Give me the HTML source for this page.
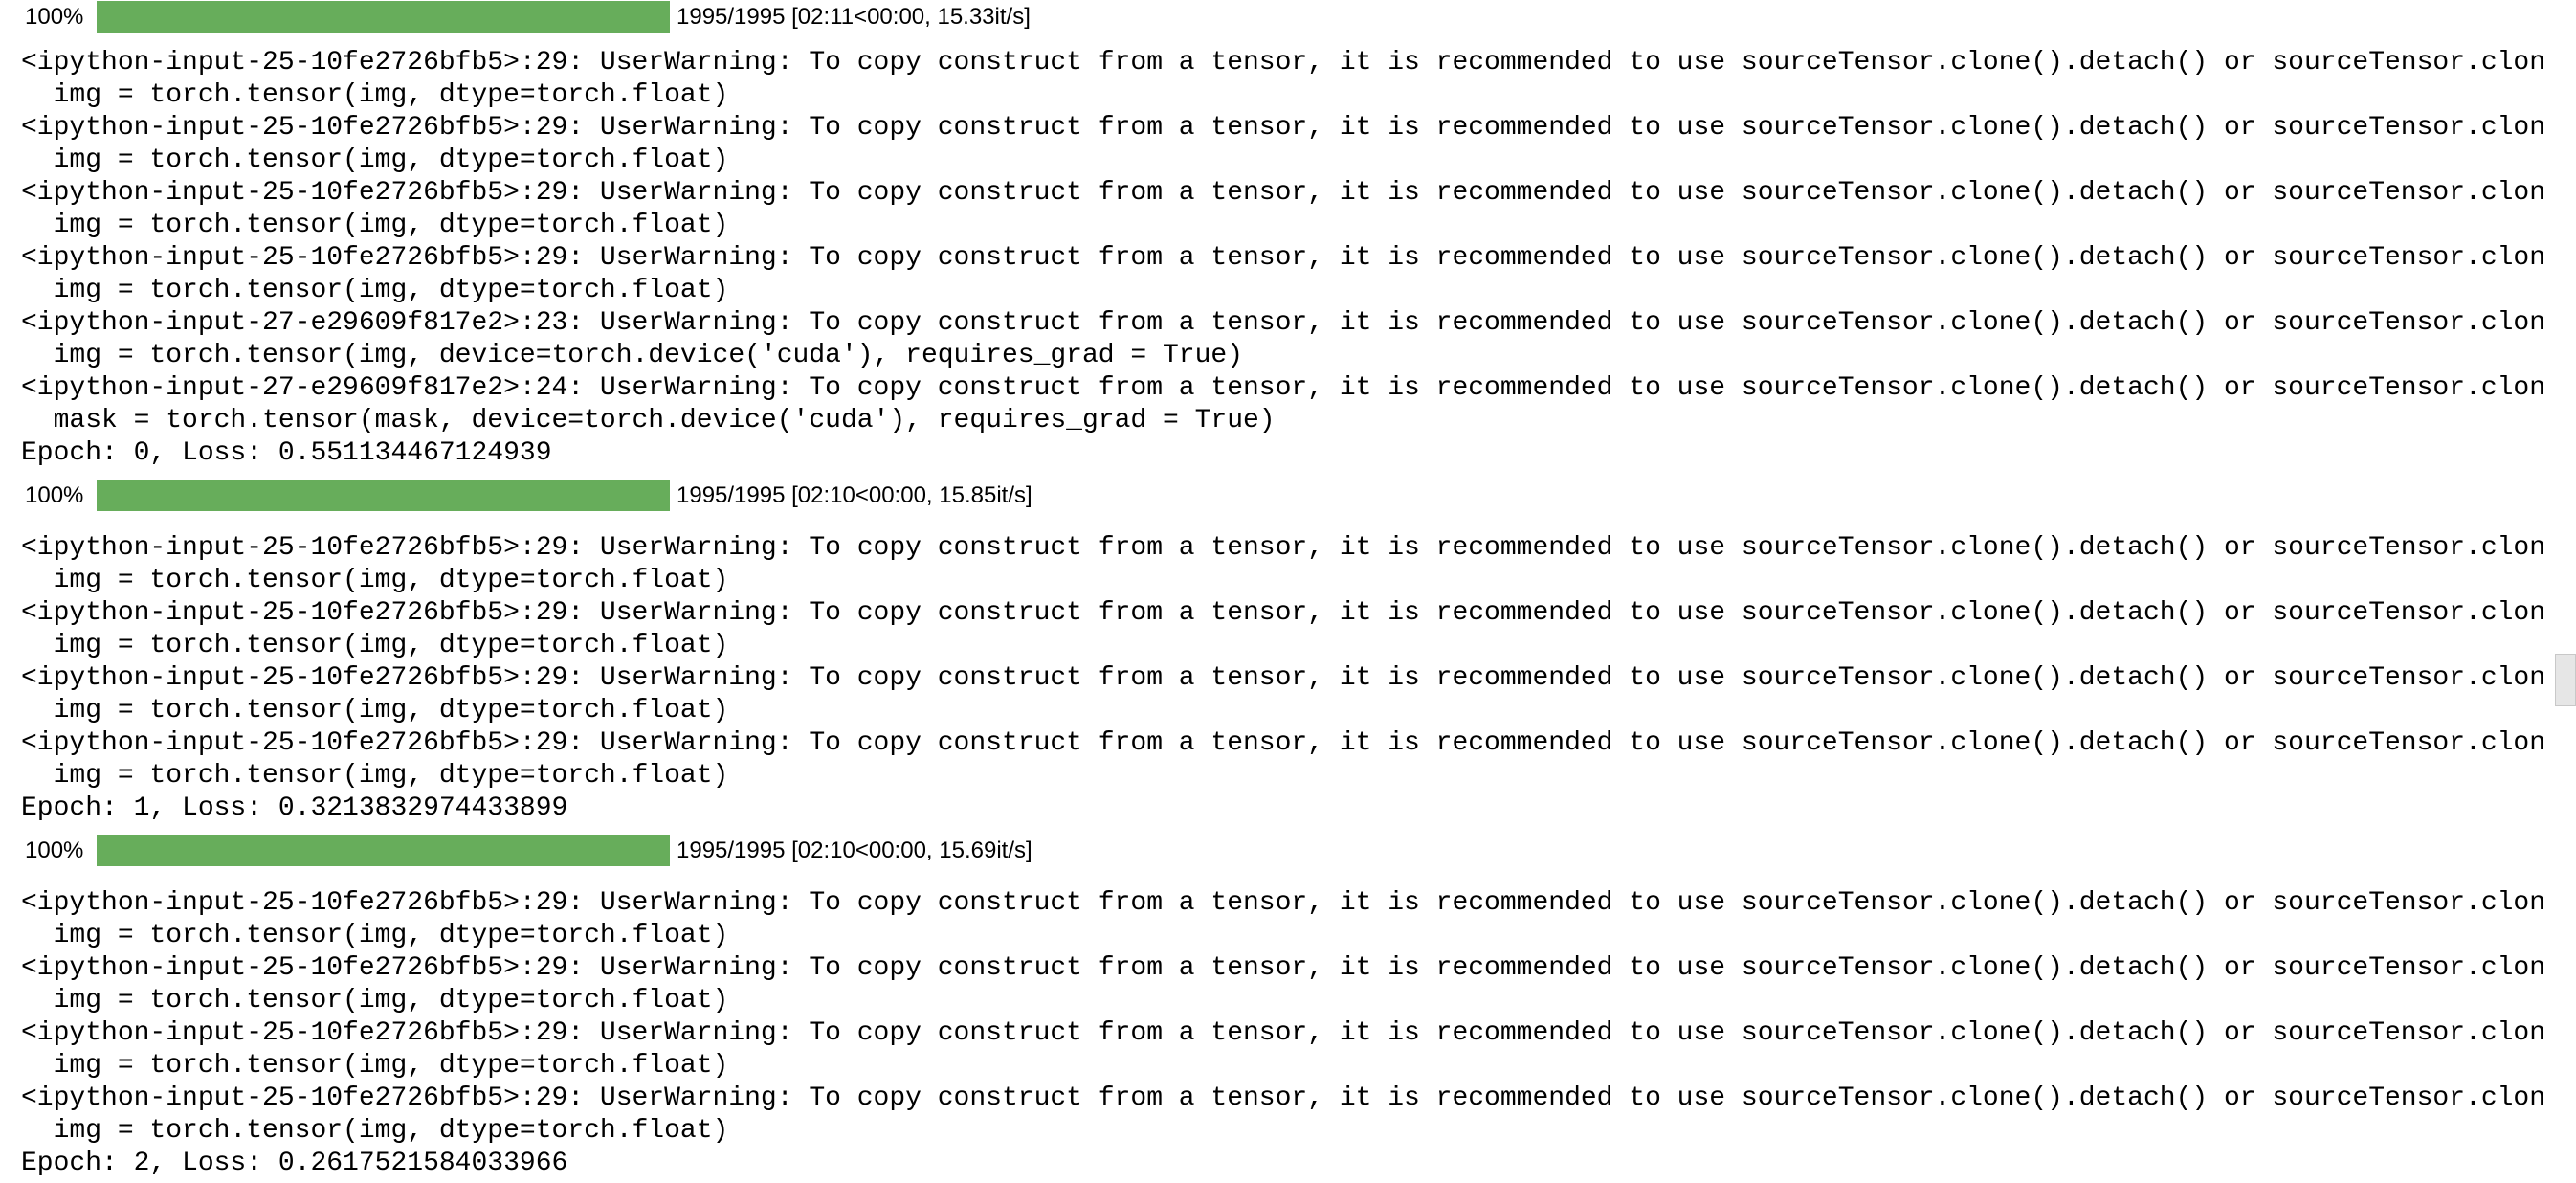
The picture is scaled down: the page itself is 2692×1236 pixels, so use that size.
<!DOCTYPE html>
<html><head><meta charset="utf-8"><style>
html,body{margin:0;padding:0;background:#fff;width:2692px;height:1236px;overflow:hidden;position:relative}
pre{position:absolute;left:22px;margin:0;width:2638px;overflow:hidden;font-family:"Liberation Mono",monospace;font-size:28px;line-height:34px;color:#000;white-space:pre}
.pg{position:absolute;left:0;height:34px;width:1400px;font-family:"Liberation Sans",sans-serif;font-size:24px;color:#000}
.pg .p{position:absolute;left:26px;top:3px}
.pg .b{position:absolute;left:101px;top:0;width:599px;height:33px;background:#67ad5b}
.pg .t{position:absolute;left:707px;top:3px}
.sb{position:absolute;left:2670px;top:683px;width:22px;height:55px;background:#e6e6e6;border:1px solid #c8c8c8;box-sizing:border-box}
</style></head><body>
<div class="pg" style="top:1px"><span class="p">100%</span><div class="b"></div><span class="t">1995/1995 [02:11&lt;00:00, 15.33it/s]</span></div>
<pre style="top:49px">&lt;ipython-input-25-10fe2726bfb5&gt;:29: UserWarning: To copy construct from a tensor, it is recommended to use sourceTensor.clone().detach() or sourceTensor.clone().requires_grad_(True)
  img = torch.tensor(img, dtype=torch.float)
&lt;ipython-input-25-10fe2726bfb5&gt;:29: UserWarning: To copy construct from a tensor, it is recommended to use sourceTensor.clone().detach() or sourceTensor.clone().requires_grad_(True)
  img = torch.tensor(img, dtype=torch.float)
&lt;ipython-input-25-10fe2726bfb5&gt;:29: UserWarning: To copy construct from a tensor, it is recommended to use sourceTensor.clone().detach() or sourceTensor.clone().requires_grad_(True)
  img = torch.tensor(img, dtype=torch.float)
&lt;ipython-input-25-10fe2726bfb5&gt;:29: UserWarning: To copy construct from a tensor, it is recommended to use sourceTensor.clone().detach() or sourceTensor.clone().requires_grad_(True)
  img = torch.tensor(img, dtype=torch.float)
&lt;ipython-input-27-e29609f817e2&gt;:23: UserWarning: To copy construct from a tensor, it is recommended to use sourceTensor.clone().detach() or sourceTensor.clone().requires_grad_(True)
  img = torch.tensor(img, device=torch.device('cuda'), requires_grad = True)
&lt;ipython-input-27-e29609f817e2&gt;:24: UserWarning: To copy construct from a tensor, it is recommended to use sourceTensor.clone().detach() or sourceTensor.clone().requires_grad_(True)
  mask = torch.tensor(mask, device=torch.device('cuda'), requires_grad = True)
Epoch: 0, Loss: 0.551134467124939</pre>
<div class="pg" style="top:501px"><span class="p">100%</span><div class="b"></div><span class="t">1995/1995 [02:10&lt;00:00, 15.85it/s]</span></div>
<pre style="top:556px">&lt;ipython-input-25-10fe2726bfb5&gt;:29: UserWarning: To copy construct from a tensor, it is recommended to use sourceTensor.clone().detach() or sourceTensor.clone().requires_grad_(True)
  img = torch.tensor(img, dtype=torch.float)
&lt;ipython-input-25-10fe2726bfb5&gt;:29: UserWarning: To copy construct from a tensor, it is recommended to use sourceTensor.clone().detach() or sourceTensor.clone().requires_grad_(True)
  img = torch.tensor(img, dtype=torch.float)
&lt;ipython-input-25-10fe2726bfb5&gt;:29: UserWarning: To copy construct from a tensor, it is recommended to use sourceTensor.clone().detach() or sourceTensor.clone().requires_grad_(True)
  img = torch.tensor(img, dtype=torch.float)
&lt;ipython-input-25-10fe2726bfb5&gt;:29: UserWarning: To copy construct from a tensor, it is recommended to use sourceTensor.clone().detach() or sourceTensor.clone().requires_grad_(True)
  img = torch.tensor(img, dtype=torch.float)
Epoch: 1, Loss: 0.3213832974433899</pre>
<div class="pg" style="top:872px"><span class="p">100%</span><div class="b"></div><span class="t">1995/1995 [02:10&lt;00:00, 15.69it/s]</span></div>
<pre style="top:927px">&lt;ipython-input-25-10fe2726bfb5&gt;:29: UserWarning: To copy construct from a tensor, it is recommended to use sourceTensor.clone().detach() or sourceTensor.clone().requires_grad_(True)
  img = torch.tensor(img, dtype=torch.float)
&lt;ipython-input-25-10fe2726bfb5&gt;:29: UserWarning: To copy construct from a tensor, it is recommended to use sourceTensor.clone().detach() or sourceTensor.clone().requires_grad_(True)
  img = torch.tensor(img, dtype=torch.float)
&lt;ipython-input-25-10fe2726bfb5&gt;:29: UserWarning: To copy construct from a tensor, it is recommended to use sourceTensor.clone().detach() or sourceTensor.clone().requires_grad_(True)
  img = torch.tensor(img, dtype=torch.float)
&lt;ipython-input-25-10fe2726bfb5&gt;:29: UserWarning: To copy construct from a tensor, it is recommended to use sourceTensor.clone().detach() or sourceTensor.clone().requires_grad_(True)
  img = torch.tensor(img, dtype=torch.float)
Epoch: 2, Loss: 0.2617521584033966</pre>
<div class="sb"></div>
</body></html>
